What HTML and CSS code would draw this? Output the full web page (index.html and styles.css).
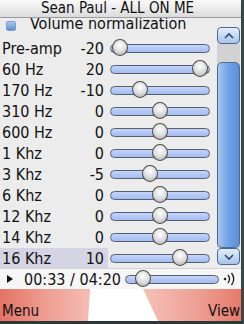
FILE: index.html
```html
<!DOCTYPE html>
<html>
<head>
    <title>Equalizer</title>
    <link rel="stylesheet" href="styles.css">
</head>
<body>
    <div class="screen">
        <div class="title-bar">Sean Paul - ALL ON ME</div>

        <div class="main">
            <div class="list">
                <div class="check-row">
                    <span class="checkbox"></span>
                    <span class="check-label">Volume normalization</span>
                </div>

                <div class="band">
                    <span class="band-name">Pre-amp</span>
                    <span class="band-value">-20</span>
                    <div class="slider"><span class="knob" style="left: 0px"></span></div>
                </div>
                <div class="band">
                    <span class="band-name">60 Hz</span>
                    <span class="band-value">20</span>
                    <div class="slider"><span class="knob" style="left: 80px"></span></div>
                </div>
                <div class="band">
                    <span class="band-name">170 Hz</span>
                    <span class="band-value">-10</span>
                    <div class="slider"><span class="knob" style="left: 20px"></span></div>
                </div>
                <div class="band">
                    <span class="band-name">310 Hz</span>
                    <span class="band-value">0</span>
                    <div class="slider"><span class="knob" style="left: 40px"></span></div>
                </div>
                <div class="band">
                    <span class="band-name">600 Hz</span>
                    <span class="band-value">0</span>
                    <div class="slider"><span class="knob" style="left: 40px"></span></div>
                </div>
                <div class="band">
                    <span class="band-name">1 Khz</span>
                    <span class="band-value">0</span>
                    <div class="slider"><span class="knob" style="left: 40px"></span></div>
                </div>
                <div class="band">
                    <span class="band-name">3 Khz</span>
                    <span class="band-value">-5</span>
                    <div class="slider"><span class="knob" style="left: 30px"></span></div>
                </div>
                <div class="band">
                    <span class="band-name">6 Khz</span>
                    <span class="band-value">0</span>
                    <div class="slider"><span class="knob" style="left: 40px"></span></div>
                </div>
                <div class="band">
                    <span class="band-name">12 Khz</span>
                    <span class="band-value">0</span>
                    <div class="slider"><span class="knob" style="left: 40px"></span></div>
                </div>
                <div class="band">
                    <span class="band-name">14 Khz</span>
                    <span class="band-value">0</span>
                    <div class="slider"><span class="knob" style="left: 40px"></span></div>
                </div>
                <div class="band selected">
                    <span class="band-name">16 Khz</span>
                    <span class="band-value">10</span>
                    <div class="slider"><span class="knob" style="left: 60px"></span></div>
                </div>
            </div>

            <div class="scrollbar">
                <div class="scroll-btn">
                    <svg width="12" height="8" viewBox="0 0 12 8"><path d="M2 6 L6 2 L10 6" fill="none" stroke="#2c4a78" stroke-width="1.6"/></svg>
                </div>
                <div class="scroll-track">
                    <div class="scroll-thumb"></div>
                </div>
                <div class="scroll-btn">
                    <svg width="12" height="8" viewBox="0 0 12 8"><path d="M2 2 L6 6 L10 2" fill="none" stroke="#2c4a78" stroke-width="1.6"/></svg>
                </div>
            </div>
        </div>

        <div class="player">
            <svg class="play" width="8" height="10" viewBox="0 0 8 10"><path d="M1 1 L7 5 L1 9 Z" fill="#111"/></svg>
            <span class="time">00:33 / 04:20</span>
            <div class="slider small"><span class="knob" style="left: 8px"></span></div>
            <svg class="speaker" width="16" height="14" viewBox="0 0 16 14">
                <circle cx="3" cy="7" r="1.3" fill="#222"/>
                <path d="M6 3 Q9 7 6 11" fill="none" stroke="#222" stroke-width="1.3"/>
                <path d="M9.5 1 Q14 7 9.5 13" fill="none" stroke="#222" stroke-width="1.3"/>
            </svg>
        </div>

        <div class="softkeys">
            <span>Menu</span>
            <span>View</span>
        </div>
    </div>
</body>
</html>
```

FILE: styles.css
```css
body {
    margin: 0;
    padding: 0;
    font-family: "DejaVu Sans Condensed", "DejaVu Sans", sans-serif;
    color: #111;
}

.screen {
    width: 241px;
    height: 321px;
    border-right: 3px solid #3a4646;
    border-bottom: 3px solid #2e3838;
    display: flex;
    flex-direction: column;
    background-color: #ececec;
    overflow: hidden;
}

.title-bar {
    height: 17px;
    flex: none;
    background: linear-gradient(#fafafa, #dcdcdc);
    border-bottom: 1px solid #9a9a9a;
    text-align: center;
    font-size: 15px;
    line-height: 17px;
    padding-right: 6px;
    position: relative;
    z-index: 1;
}

.main {
    height: 250px;
    flex: none;
    display: flex;
}

.list {
    flex: 1;
    overflow: hidden;
}

.check-row {
    height: 21px;
    margin-top: -1px;
    display: flex;
    align-items: flex-start;
    padding-left: 6px;
    font-size: 16px;
}

.checkbox {
    margin-top: 4px;
    width: 8px;
    height: 8px;
    border-radius: 2px;
    background: linear-gradient(#a8c8ec, #5d8fd0);
    border: 1px solid #7aa0d0;
}

.check-label {
    margin-left: 14px;
    line-height: 16px;
    margin-top: -1px;
}

.band {
    height: 21px;
    display: flex;
    align-items: center;
    font-size: 16px;
    padding-left: 2px;
}

.band-name {
    width: 68px;
}

.band-value {
    width: 34px;
    text-align: right;
}

.band.selected {
    background: linear-gradient(to right, #d4d4e4 108px, transparent 108px);
}

.slider {
    position: relative;
    margin-left: 6px;
    width: 98px;
    height: 7px;
    border: 1px solid #556070;
    border-radius: 5px;
    background: linear-gradient(#c4d4fa, #a4bcf2);
}

.knob {
    position: absolute;
    top: -6px;
    margin-left: 1px;
    width: 16px;
    height: 17px;
    border: 1px solid #4a4a4a;
    border-radius: 50%;
    box-sizing: border-box;
    background: radial-gradient(circle at 50% 35%, #ffffff, #dadada 55%, #a0a0a0);
}

.scrollbar {
    width: 24px;
    flex: none;
    display: flex;
    flex-direction: column;
    padding-top: 9px;
    padding-right: 1px;
    box-sizing: border-box;
    margin-bottom: 3px;
}

.scroll-btn {
    height: 15px;
    border: 1px solid #4a6a96;
    border-radius: 4px;
    background: linear-gradient(#e4eefa, #a8c4ea);
    display: flex;
    align-items: center;
    justify-content: center;
}

.scroll-track {
    flex: 1;
    background-color: #d2d2d2;
    display: flex;
    flex-direction: column;
    padding-top: 18px;
}

.scroll-thumb {
    flex: 1;
    border: 1px solid #4a6a96;
    border-radius: 5px;
    background: linear-gradient(to right, #a8c8f0, #78a8e8 40%, #5a8ed8);
}

.player {
    height: 20px;
    flex: none;
    display: flex;
    align-items: center;
    background-color: #f6f6f6;
    border-top: 1px solid #d4d4d4;
    font-size: 16px;
}

.play {
    margin-left: 6px;
}

.time {
    margin-left: 10px;
}

.slider.small {
    margin-left: 4px;
    width: 92px;
}

.speaker {
    margin-left: 3px;
}

.softkeys {
    flex: 1;
    position: relative;
    display: flex;
    justify-content: space-between;
    align-items: flex-end;
    padding: 0 1px 1px 2px;
    font-size: 15px;
    background: linear-gradient(to right, #e47464 0, #ee9c90 45px, #f4bab2 86px, #f4bcb4 150px, #ee9e92 200px, #e67a6a 241px);
}

.softkeys::before {
    content: "";
    position: absolute;
    top: 0;
    bottom: 0;
    left: 88px;
    width: 72px;
    background-color: #ffffff;
    clip-path: polygon(2px 0, 55px 0, 70px 100%, 0 100%);
}

.softkeys span {
    position: relative;
}
```
